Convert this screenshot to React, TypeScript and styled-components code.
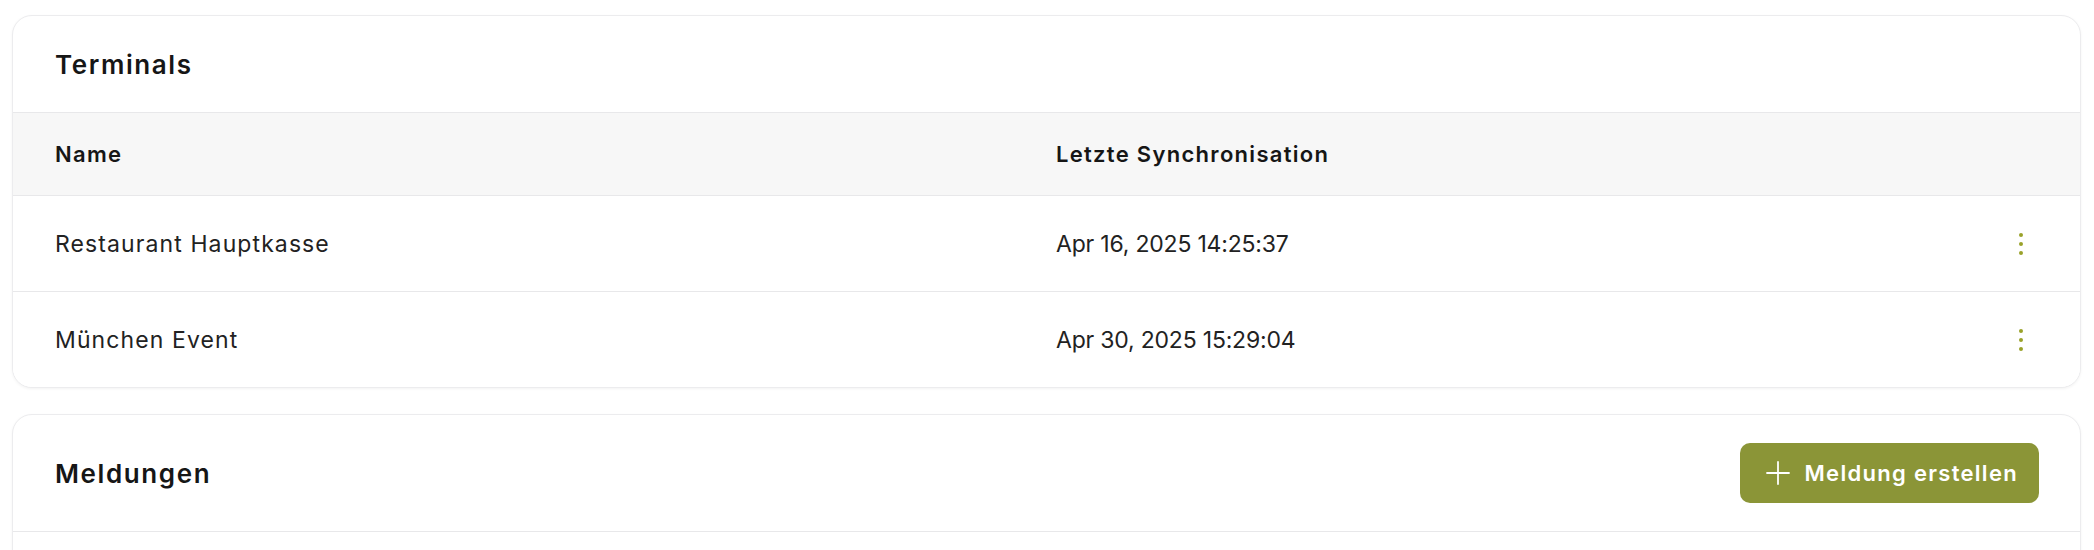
import React from "react";
import styled, { createGlobalStyle } from "styled-components";

const GlobalStyle = createGlobalStyle`
  body {
    margin: 0;
    padding: 15px 13px 0 12px;
    background: #ffffff;
    font-family: "Inter", "Open Sans", sans-serif;
    color: #1c1c1c;
  }
`;

const Page = styled.div`
  display: flex;
  flex-direction: column;
  gap: 26px;
`;

const Card = styled.section`
  background: #fff;
  border: 1px solid #ececee;
  border-radius: 20px;
  box-shadow: 0 1px 3px rgba(0, 0, 0, 0.05);
  overflow: hidden;
`;

const CardHeader = styled.div<{ $tall?: boolean }>`
  display: flex;
  align-items: center;
  justify-content: space-between;
  height: ${(p) => (p.$tall ? "116px" : "96px")};
  padding: 0 41px 0 42px;
  border-bottom: 1px solid #e8e8ea;
`;

const CardTitle = styled.h2`
  margin: 0;
  font-size: 26px;
  font-weight: 600;
  color: #161616;
  letter-spacing: 1.6px;
`;

const Row = styled.div<{ $head?: boolean }>`
  display: grid;
  grid-template-columns: 1001px 1fr auto;
  align-items: center;
  height: ${(p) => (p.$head ? "82px" : "95px")};
  padding: 0 57px 0 42px;
  background: ${(p) => (p.$head ? "#f7f7f7" : "#fff")};
  border-bottom: 1px solid #e8e8ea;

  &:last-child {
    border-bottom: none;
  }
`;

const HeadCell = styled.div`
  font-size: 22px;
  font-weight: 600;
  color: #161616;
  letter-spacing: 1.3px;
`;

const Cell = styled.div<{ $numeric?: boolean }>`
  font-size: 23px;
  font-weight: 400;
  color: #222;
  letter-spacing: ${(p) => (p.$numeric ? "-0.2px" : "1.1px")};
`;

const MenuButton = styled.button`
  display: flex;
  align-items: center;
  justify-content: center;
  width: 4px;
  padding: 0;
  border: none;
  background: none;
  cursor: pointer;
`;

const PrimaryButton = styled.button`
  display: flex;
  align-items: center;
  gap: 15px;
  height: 60px;
  padding: 0 21px 0 26px;
  border: none;
  border-radius: 10px;
  background: #8b9537;
  color: #fff;
  font-family: inherit;
  font-size: 22px;
  font-weight: 600;
  letter-spacing: 1.3px;
  cursor: pointer;
`;

const CardBody = styled.div`
  height: 60px;
`;

const Kebab = () => (
  <svg width="4" height="22" viewBox="0 0 4 22">
    <circle cx="2" cy="2" r="2" fill="#9aa22a" />
    <circle cx="2" cy="11" r="2" fill="#9aa22a" />
    <circle cx="2" cy="20" r="2" fill="#9aa22a" />
  </svg>
);

const Plus = () => (
  <svg width="24" height="24" viewBox="0 0 24 24">
    <path d="M12 1v22M1 12h22" stroke="#fff" strokeWidth="1.8" strokeLinecap="round" />
  </svg>
);

const terminals = [
  { name: "Restaurant Hauptkasse", sync: "Apr 16, 2025 14:25:37" },
  { name: "München Event", sync: "Apr 30, 2025 15:29:04" },
];

export default function App() {
  return (
    <>
      <GlobalStyle />
      <Page>
        <Card>
          <CardHeader>
            <CardTitle>Terminals</CardTitle>
          </CardHeader>
          <Row $head>
            <HeadCell>Name</HeadCell>
            <HeadCell>Letzte Synchronisation</HeadCell>
            <span />
          </Row>
          {terminals.map((t) => (
            <Row key={t.name}>
              <Cell>{t.name}</Cell>
              <Cell $numeric>{t.sync}</Cell>
              <MenuButton aria-label="Aktionen">
                <Kebab />
              </MenuButton>
            </Row>
          ))}
        </Card>
        <Card>
          <CardHeader $tall>
            <CardTitle>Meldungen</CardTitle>
            <PrimaryButton>
              <Plus />
              Meldung erstellen
            </PrimaryButton>
          </CardHeader>
          <CardBody />
        </Card>
      </Page>
    </>
  );
}
